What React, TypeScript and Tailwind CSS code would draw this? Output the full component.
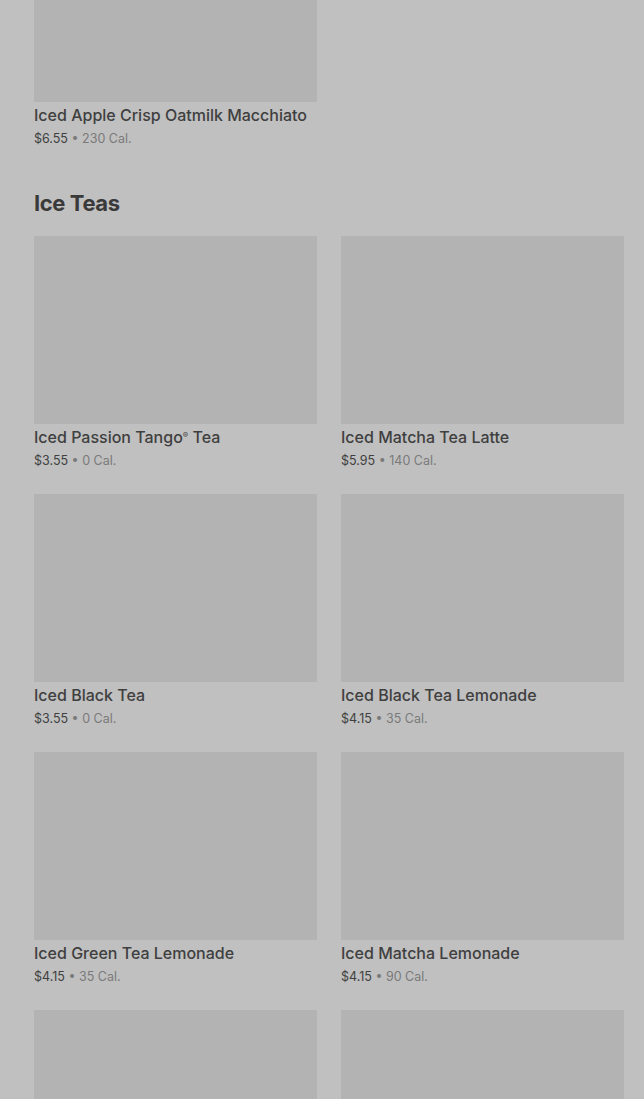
import React from "react";

type Drink = { name: React.ReactNode; price: string; cal: string };

const teas: Drink[] = [
  {
    name: (
      <>
        Iced Passion Tango
        <span className="relative -top-[5px] align-baseline text-[8px] leading-none">®</span> Tea
      </>
    ),
    price: "$3.55",
    cal: "0 Cal.",
  },
  { name: "Iced Matcha Tea Latte", price: "$5.95", cal: "140 Cal." },
  { name: "Iced Black Tea", price: "$3.55", cal: "0 Cal." },
  { name: "Iced Black Tea Lemonade", price: "$4.15", cal: "35 Cal." },
  { name: "Iced Green Tea Lemonade", price: "$4.15", cal: "35 Cal." },
  { name: "Iced Matcha Lemonade", price: "$4.15", cal: "90 Cal." },
  { name: "", price: "", cal: "" },
  { name: "", price: "", cal: "" },
];

function DrinkCard({ drink, imgClass = "h-[188px]" }: { drink: Drink; imgClass?: string }) {
  return (
    <div className="flex flex-col">
      <div className={`${imgClass} w-full bg-[#b3b3b3]`} />
      {drink.name && (
        <div className="pt-[2px]">
          <p className="h-[22px] text-[16px] leading-[22px] font-medium text-[#3f3f3f]">{drink.name}</p>
          <p className="mt-[2px] text-[12.5px] leading-[22px] text-[#3f3f3f]">
            {drink.price}
            <span className="text-[#7a7a7a]"> • {drink.cal}</span>
          </p>
        </div>
      )}
    </div>
  );
}

export default function App() {
  return (
    <div
      className="h-[1099px] overflow-hidden bg-[#c0c0c0] pl-[34px] pr-[20px]"
      style={{ fontFamily: "Inter, 'Noto Sans', sans-serif" }}
    >
      <div className="grid grid-cols-2 gap-x-[24px]">
        <DrinkCard
          drink={{ name: "Iced Apple Crisp Oatmilk Macchiato", price: "$6.55", cal: "230 Cal." }}
          imgClass="h-[102px]"
        />
      </div>

      <h2 className="mt-[38px] text-[22px] leading-[30px] font-bold text-[#3a3a3a] tracking-[-0.4px]">
        Ice Teas
      </h2>

      <div className="mt-[18px] grid grid-cols-2 gap-x-[24px] gap-y-[22px]">
        {teas.map((d, i) => (
          <DrinkCard key={i} drink={d} />
        ))}
      </div>
    </div>
  );
}
